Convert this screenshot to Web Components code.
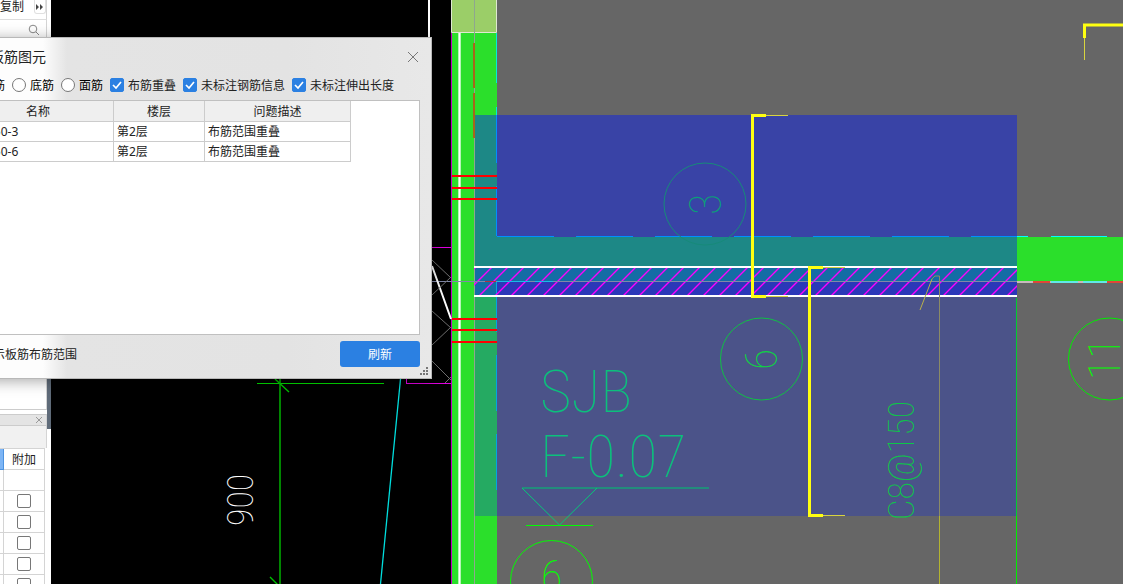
<!DOCTYPE html>
<html lang="zh-CN">
<head>
<meta charset="utf-8">
<title>校核板筋图元</title>
<style>
html, body {
  height: 100%;
  margin: 0;
  overflow: hidden;
}
body {
  font: 12px/16px "Noto Sans", "Noto Sans CJK SC", sans-serif;
  color: #222;
}
</style>
</head>
<body>
<cad-app>
  <side-panel slot="side"></side-panel>
  <cad-view slot="view"></cad-view>
  <check-dialog slot="dialog" heading="校核板筋图元">
    <check-option slot="options" type="radio" text="负筋" checked></check-option>
    <check-option slot="options" type="radio" text="底筋"></check-option>
    <check-option slot="options" type="radio" text="面筋"></check-option>
    <check-option slot="options" type="checkbox" text="布筋重叠" checked></check-option>
    <check-option slot="options" type="checkbox" text="未标注钢筋信息" checked></check-option>
    <check-option slot="options" type="checkbox" text="未标注伸出长度" checked></check-option>
    <issue-table></issue-table>
    <check-option slot="footer" type="checkbox" text="显示板筋布筋范围" checked></check-option>
    <push-button slot="footer" text="刷新"></push-button>
  </check-dialog>
</cad-app>

<script>
class BaseElement extends HTMLElement {
  connectedCallback() {
    if (this.shadowRoot) return;
    const template = document.createElement("template");
    template.innerHTML = this.render();
    this.attachShadow({ mode: "open" });
    this.shadowRoot.appendChild(template.content.cloneNode(true));
  }
}

class CadApp extends BaseElement {
  render() {
    return `
<style>
:host {
  display: flex;
  position: relative;
  height: 100vh;
  overflow: hidden;
}
</style>
<slot name="side"></slot>
<slot name="view"></slot>
<slot name="dialog"></slot>`;
  }
}

class CheckOption extends BaseElement {
  render() {
    const type = this.getAttribute("type");
    const checked = this.hasAttribute("checked") ? "checked" : "";
    return `
<style>
:host {
  display: block;
}
label {
  display: flex;
  align-items: center;
  gap: 4px;
  white-space: nowrap;
}
span {
  padding-top: 2px;
}
input {
  appearance: none;
  box-sizing: border-box;
  flex: none;
  width: 14px;
  height: 14px;
  margin: 0;
  border: 1px solid #777;
  background: #fff;
}
input[type="radio"] {
  border-radius: 50%;
}
input[type="radio"] + span {
  color: #000;
}
input[type="radio"]:checked {
  border: 4px solid #2b80e2;
}
input[type="checkbox"] {
  border-radius: 2px;
}
input[type="checkbox"]:checked {
  border-color: #2b80e2;
  background: #2b80e2 url('data:image/svg+xml,<svg xmlns="http://www.w3.org/2000/svg" viewBox="0 0 12 12"><path d="M2 6l3 3 5-6" fill="none" stroke="white" stroke-width="1.7"/></svg>') center / 12px no-repeat;
}
</style>
<label><input type="${type}" name="kind" ${checked}><span>${this.getAttribute("text")}</span></label>`;
  }
}

class PushButton extends BaseElement {
  render() {
    return `
<style>
:host {
  display: block;
}
button {
  display: block;
  width: 80px;
  height: 26px;
  padding: 2px 0 0;
  border: 0;
  border-radius: 3px;
  background: #2b80e2;
  color: #fff;
  font: inherit;
}
</style>
<button type="button">${this.getAttribute("text")}</button>`;
  }
}

class IssueTable extends BaseElement {
  render() {
    const rows = [
      ["FJC-150-3", "第2层", "布筋范围重叠"],
      ["FJC-150-6", "第2层", "布筋范围重叠"]
    ];
    return `
<style>
:host {
  display: block;
}
table {
  border-collapse: separate;
  border-spacing: 0;
  table-layout: fixed;
  width: 388px;
}
.name { width: 151px; }
.floor { width: 91px; }
th, td {
  box-sizing: border-box;
  height: 20px;
  padding: 0 3px;
  border-right: 1px solid #ccc;
  border-bottom: 1px solid #ccc;
  line-height: 18px;
  text-align: left;
  white-space: nowrap;
}
th {
  height: 21px;
  padding-top: 2px;
  background: #efefef;
  font-weight: normal;
  text-align: center;
}
</style>
<table>
  <colgroup><col class="name"><col class="floor"><col></colgroup>
  <thead><tr><th>名称</th><th>楼层</th><th>问题描述</th></tr></thead>
  <tbody>${rows.map(r => `<tr>${r.map(c => `<td>${c}</td>`).join("")}</tr>`).join("")}</tbody>
</table>`;
  }
}

// floating window, dragged partly past the left edge of the desktop
class CheckDialog extends BaseElement {
  render() {
    return `
<style>
:host {
  position: absolute;
  left: -50px;
  top: 37px;
  box-sizing: border-box;
  width: 482px;
  padding: 0 11px 11px;
  border: 1px solid #b8b8b8;
  background: linear-gradient(90deg, #fdfdfd 92px, #e4e4e4 116px, #e3e3e3 70%, #e8e8e8);
  box-shadow: 0 2px 14px rgba(0, 0, 0, .35);
}
header {
  display: flex;
  align-items: center;
  justify-content: space-between;
  height: 38px;
}
h1 {
  margin: 0;
  font-size: 14px;
  line-height: 20px;
  font-weight: normal;
}
.close {
  width: 14px;
  height: 14px;
  padding: 0;
  border: 0;
  background: none;
}
.close svg {
  display: block;
}
.options {
  display: flex;
  align-items: center;
  gap: 7px;
  height: 18px;
  margin-bottom: 6px;
  padding-left: 1px;
}
.list {
  height: 233px;
  border: 1px solid #c0c0c0;
  background: #fff;
}
footer {
  display: flex;
  align-items: center;
  justify-content: space-between;
  margin-top: 6px;
  padding-left: 1px;
}
.grip {
  position: absolute;
  right: 3px;
  bottom: 3px;
}
</style>
<header>
  <h1>${this.getAttribute("heading")}</h1>
  <button class="close" type="button" aria-label="关闭">
    <svg width="14" height="14"><path d="M2 2l10 10M12 2L2 12" stroke="#777" fill="none"/></svg>
  </button>
</header>
<div class="options"><slot name="options"></slot></div>
<div class="list"><slot></slot></div>
<footer><slot name="footer"></slot></footer>
<svg class="grip" width="8" height="8" fill="#777"><path d="M6 0h2v2h-2zM6 3h2v2h-2zM3 3h2v2h-2zM6 6h2v2h-2zM3 6h2v2h-2zM0 6h2v2h-2z"/></svg>`;
  }
}

class SidePanel extends BaseElement {
  render() {
    const row = `<tr><td></td><td><input type="checkbox" aria-label="附加"></td></tr>`;
    return `
<style>
:host {
  display: flex;
  flex-direction: column;
  flex: none;
  box-sizing: border-box;
  width: 51px;
  padding-right: 4px;
  overflow: hidden;
  background: linear-gradient(#5f6b79, #5f6b79) right 0 top 379px / 4px 50px no-repeat #fff;
}
.tools, .search, .tree, .title, .bar {
  box-sizing: border-box;
  border-right: 1px solid #d4d4d4;
  flex: none;
}
.tools {
  display: flex;
  justify-content: space-between;
  height: 20px;
  border-bottom: 1px solid #ddd;
}
.tools button {
  padding: 0;
  border: 0;
  background: none;
  color: inherit;
  font: inherit;
  height: 14px;
  line-height: 12px;
}
.tools .more {
  box-sizing: border-box;
  width: 12px;
  border: 1px solid #e0e0e0;
  border-top: 0;
  border-radius: 0 0 3px 3px;
}
.more svg, .title svg, .search svg {
  display: block;
}
.search {
  display: flex;
  justify-content: flex-end;
  padding: 4px 6px 0 0;
  height: 20px;
}
.tree {
  height: 370px;
  border-bottom: 1px solid #ccc;
}
.title {
  display: flex;
  align-items: center;
  justify-content: flex-end;
  height: 12px;
  margin-top: 4px;
  padding-right: 3px;
  border-top: 1px solid #ccc;
  border-bottom: 1px solid #ccc;
  background: #e4e4e4;
}
.title button {
  padding: 0;
  border: 0;
  background: none;
}
.bar {
  height: 22px;
  background: #f1f1f1;
}
table {
  flex: none;
  width: 45px;
  table-layout: fixed;
  border-collapse: separate;
  border-spacing: 0;
  border-top: 1px solid #d4d4d4;
}
th, td {
  box-sizing: border-box;
  height: 21px;
  padding: 0;
  border-right: 1px solid #d4d4d4;
  border-bottom: 1px solid #d4d4d4;
  font-weight: normal;
  line-height: 16px;
  text-align: center;
}
th {
  padding-top: 2px;
}
.key { width: 4px; }
th:first-child {
  background: #7db5f5;
  border-color: #4d93e0;
}
input {
  appearance: none;
  display: block;
  box-sizing: border-box;
  width: 14px;
  height: 14px;
  margin: 0 auto;
  border: 1px solid #777;
  border-radius: 2px;
  background: #fff;
}
</style>
<div class="tools">
  <button type="button">复制</button>
  <button class="more" type="button" aria-label="更多"><svg width="10" height="12" fill="#444"><path d="M1 3l3 3-3 3zM5 3l3 3-3 3z"/></svg></button>
</div>
<div class="search"><svg width="12" height="12" fill="none" stroke="#888"><circle cx="5" cy="5" r="3.8"/><path d="M8 8l3 3"/></svg></div>
<div class="tree"></div>
<div class="title"><button type="button" aria-label="关闭"><svg width="8" height="8" stroke="#999"><path d="M1 1l6 6M7 1l-6 6"/></svg></button></div>
<div class="bar"></div>
<table>
  <colgroup><col class="key"><col></colgroup>
  <tr><th></th><th>附加</th></tr>
  <tr><td></td><td></td></tr>
  ${row.repeat(7)}
</table>`;
  }
}

class CadView extends BaseElement {
  hatch() {
    // 45 degree lines, 16px apart, over the 28px slab band
    let d = "";
    for (let x = 475; x < 1050; x += 16) {
      d += `M${x + 1} 267l-30 30`;
    }
    return d;
  }

  render() {
    return `
<style>
:host {
  display: block;
  flex: 1;
  min-width: 0;
  overflow: hidden;
  background: #666;
}
svg {
  display: block;
  width: 100%;
  height: 100%;
}
text {
  font-family: "Roboto Condensed", Lato, Roboto, sans-serif;
  font-weight: 100;
}
.line {
  shape-rendering: crispEdges;
}
</style>
<svg fill="none">
<defs><clipPath id="band"><path d="M474 268h543v27h-543z"/></clipPath></defs>
<g transform="translate(-51 0)">
  <!-- backgrounds and walls -->
  <path fill="#000" d="M51 0h400v4000h-400z"/>
  <path fill="#2bdf2b" d="M451 33h46v3967h-46zM1017 237h4000v44h-4000z"/>
  <path fill="#9bce68" stroke="#dfe8d2" d="M451.500 -5h45v37.500h-45z"/>

  <!-- slab rebar ranges -->
  <path fill="#3943a6" d="M497 115h520v122h-520z"/>
  <path fill="#1d8886" d="M474 115h23v122h520v30h-543z"/>
  <path fill="#2b38b8" d="M497 281h520v15h-520z"/>
  <path fill="#146ca5" d="M474 267h543v14h-520v15h-23z"/>
  <path fill="#4b5389" d="M497 296h520v220h-520z"/>
  <path fill="#25aa62" d="M474 296h23v220h-23z"/>

  <!-- left wall edges -->
  <g class="line">
  <path stroke="#c000c0" d="M451.500 33V4000"/>
  <path stroke="#b6f5b6" stroke-width="3" d="M459.500 33V4000"/>
  <path stroke="#ffffff" d="M459.500 33V4000"/>
  <path stroke="#8fa68f" d="M474.500 0V4000"/>
  <path stroke="#a8651c" stroke-width="2" d="M474 43V88M474 93V138"/>
  <path stroke="#00f0d8" d="M496.500 33V83M496.500 107V115"/>
  <path stroke="#0090ff" d="M496.500 115V163M496.500 186V236"/>
  <path stroke="#00a8e0" d="M496.500 281V332M496.500 355V411M496.500 434V490"/>
  <path stroke="#0090ff" stroke-dasharray="57 22" d="M497 236.500H1017"/>
  <path stroke="#00ffff" d="M1017 236.500H1028M1051 236.500H1107"/>
  <path stroke="#ff0000" stroke-width="2" d="M452 176h45M452 188h45M452 199h45M452 319h45M452 330h45M452 342h45"/>
  </g>

  <!-- hatch band -->
  <path stroke="#ff00ff" stroke-width="1.400" clip-path="url(#band)" d="${this.hatch()}"/>
  <g class="line">
  <path stroke="#8088a8" d="M432 281.500H1017"/>
  <path stroke="#b03040" d="M485 281.500H496"/>
  <path stroke="#1ab8e8" d="M497 281.500H530M535 281.500H553"/>
  <path stroke="#ffffff" stroke-width="2" d="M474 267H1017M474 296H1017"/>
  <path stroke="#c8b8bc" stroke-width="2" d="M1017 282H4000"/>
  <path stroke="#e04838" stroke-width="2" d="M1033 282H1050M1107 282H1123"/>
  <path stroke="#60e8e8" stroke-width="2" d="M1051 282H1078M1083 282H1107"/>
  </g>

  <!-- left side linework -->
  <path stroke="#ffffff" stroke-width="2" d="M429 0V38M432 266L451 319"/>
  <path stroke="#707070" d="M432 260l19 18M432 295l19 -18M432 311l19 17M432 345l19 -18M432 361l19 19M445 383l6 -6"/>
  <path class="line" stroke="#e000e0" d="M406.500 378V383.500H451M431 247.500H451"/>
  <path class="line" stroke="#008500" stroke-width="2" d="M280 378V4000"/>
  <path class="line" stroke="#00dd00" d="M257 383.500H384"/>
  <path stroke="#00c000" stroke-width="1.400" d="M275 379L289 392M270 577L284 591"/>
  <path stroke="#00dede" stroke-width="1.300" d="M400.500 379L380.500 584"/>

  <!-- axis bubbles and level mark -->
  <circle cx="705" cy="204" r="41" stroke="#178a7a"/>
  <circle cx="761.500" cy="359" r="41" stroke="#10c045"/>
  <circle cx="1109.500" cy="359" r="41" stroke="#00ee00"/>
  <circle cx="551.500" cy="581.500" r="41" stroke="#00ff00"/>
  <path class="line" stroke="#238c7c" stroke-width="2" d="M522 488H709"/>
  <path stroke="#08c878" d="M522 488L559.500 525L597 488"/>
  <path class="line" stroke="#00ff00" d="M526 525.500H593"/>
  <path class="line" stroke="#00cc33" d="M1016.500 298V516"/>
  <path class="line" stroke="#00ee00" d="M1016.500 516V4000"/>
  <path stroke="#8b8b66" d="M932 279L935 276H939.500V516"/>
  <path stroke="#b8b04c" d="M920 310L932 279"/>
  <path class="line" stroke="#b4b430" d="M939.500 516V4000"/>

  <!-- rebar range marks -->
  <path stroke="#ffff11" stroke-width="3" d="M766 115.500H752.500V296.500H766M823 267.500H809.500V515.500H823M4000 25H1084.500V38"/>
  <path class="line" stroke="#d8d440" d="M766 115.500H788M766 296.500H788M823 267.500H845M823 515.500H845M1084.500 38V60"/>

  <!-- annotations -->
  <g font-size="60" fill="#0cc07c">
    <text x="540" y="412">SJB</text>
    <text x="540" y="477">F-0.07</text>
  </g>
  <g font-size="36">
    <text transform="translate(253 526) rotate(-90)" fill="#fff">900</text>
    <text transform="translate(914 520) rotate(-90)" fill="#0cc848">C8@150</text>
  </g>
  <g font-size="44">
    <text transform="translate(721 215) rotate(-90)" fill="#0aa078">3</text>
    <text transform="translate(777 370) rotate(-90)" fill="#10d045">6</text>
    <text transform="translate(1120 380) rotate(-90)" fill="#0f0">11</text>
    <text x="541" y="592" fill="#0f0">6</text>
  </g>
</g>
</svg>`;
  }
}

customElements.define("cad-app", CadApp);
customElements.define("check-option", CheckOption);
customElements.define("push-button", PushButton);
customElements.define("issue-table", IssueTable);
customElements.define("check-dialog", CheckDialog);
customElements.define("side-panel", SidePanel);
customElements.define("cad-view", CadView);
</script>
</body>
</html>
